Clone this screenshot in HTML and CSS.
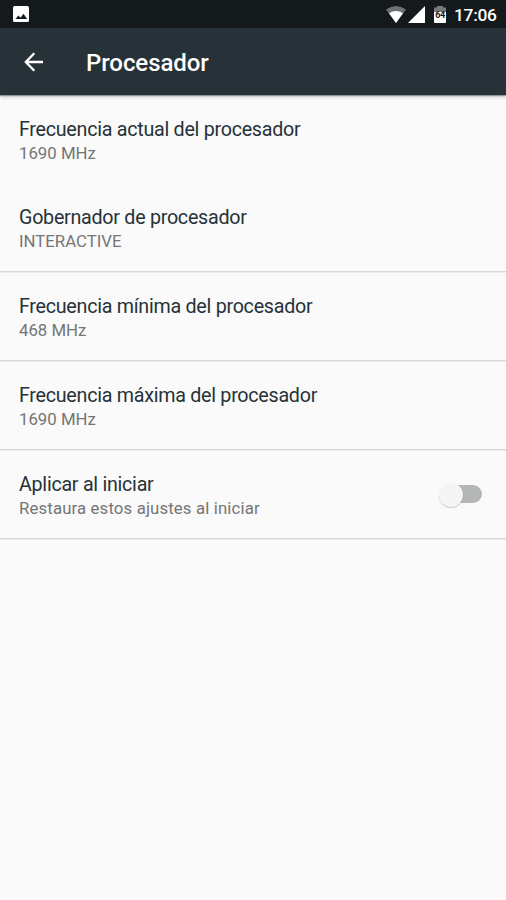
FILE: index.html
```html
<!DOCTYPE html>
<html lang="es">
<head>
<meta charset="utf-8">
<meta name="viewport" content="width=device-width, initial-scale=1">
<title>Procesador</title>
<link rel="stylesheet" href="styles.css">
</head>
<body>
<div class="status-bar">
  <svg class="photo" width="16" height="16" viewBox="0 0 16 16"><rect width="16" height="16" rx="1.6" fill="#fff"/><path d="M2.500 13 5.500 9.500l2 2.200 3-4 3.600 5.300z" fill="#14191c"/></svg>
  <div class="status-icons">
    <svg class="wifi" width="20" height="17" viewBox="0 0 20 17"><path d="M0 3.600Q10-3.600 20 3.600L10 17z" fill="#6d7173"/><path d="M3 7.200Q10 3 17 7.200L10 17z" fill="#fff"/></svg>
    <svg class="signal" width="17" height="17" viewBox="0 0 17 17"><path d="M17 0v17H0z" fill="#fff"/></svg>
    <span class="battery"><svg width="12" height="17" viewBox="0 0 12 17"><path d="M3 0h6v1.500h3V8H0V1.500h3z" fill="#76797b"/><path d="M0 6h12v10.200q0 .8-.8.8H.8Q0 17 0 16.200z" fill="#fff"/></svg><span class="level">64</span></span>
    <span class="clock">17:06</span>
  </div>
</div>
<header class="toolbar">
  <svg class="back" width="20" height="20" viewBox="0 0 20 20"><path d="M19 10H2M10.300 1.200 1.800 10l8.500 8.800" fill="none" stroke="#fff" stroke-width="2.300"/></svg>
  <h1>Procesador</h1>
</header>
<main>
  <div class="row plain"><div><h2>Frecuencia actual del procesador</h2><p>1690 MHz</p></div></div>
  <div class="row"><div><h2>Gobernador de procesador</h2><p>INTERACTIVE</p></div></div>
  <div class="row"><div><h2>Frecuencia mínima del procesador</h2><p>468 MHz</p></div></div>
  <div class="row"><div><h2>Frecuencia máxima del procesador</h2><p>1690 MHz</p></div></div>
  <div class="row"><div><h2>Aplicar al iniciar</h2><p class="description">Restaura estos ajustes al iniciar</p></div><span class="switch"></span></div>
</main>
</body>
</html>
```
FILE: styles.css
```css
* { box-sizing: border-box; }
body {
  margin: 0;
  min-height: 900px;
  background: #fafafa;
  color: #263238;
  font-family: Roboto, sans-serif;
}
h1, h2, p { margin: 0; }
svg { display: block; }
.status-bar {
  height: 28px;
  padding: 6px 9px 0 13px;
  display: flex;
  justify-content: space-between;
  align-items: flex-start;
  background: #14191c;
}
.status-icons { display: flex; color: #fff; }
.signal { margin-left: 2px; }
.battery { position: relative; margin-left: 9px; }
.level {
  position: absolute;
  left: -1px;
  top: 5px;
  width: 14px;
  color: #14191c;
  font-size: 9px;
  font-weight: 700;
  line-height: 9px;
  letter-spacing: -.3px;
  text-align: center;
}
.clock {
  width: 43px;
  margin-left: 8px;
  font-size: 17.4px;
  font-weight: 500;
  line-height: 18px;
  letter-spacing: -.3px;
}
.toolbar {
  position: relative;
  height: 67px;
  display: flex;
  align-items: center;
  padding: 1px 0 0 24px;
  background: #263238;
  box-shadow: 0 1px 1px rgba(0, 0, 0, .3), 0 2px 4px rgba(0, 0, 0, .2);
}
h1 {
  margin-left: 42px;
  padding-top: 2px;
  color: #fff;
  font-size: 24px;
  font-weight: 500;
  line-height: 30px;
  letter-spacing: -.07px;
}
main { padding-top: 1px; }
.row {
  height: 89px;
  display: flex;
  justify-content: space-between;
  padding: 22px 19px 0;
  border-bottom: 1px solid #d6d7d7;
  box-shadow: 0 1px 0 #ececec;
}
.row.plain {
  height: 87px;
  padding-top: 21px;
  border-bottom: 0;
  box-shadow: none;
}
h2 { font-size: 19.7px; font-weight: 400; line-height: 25px; letter-spacing: -.27px; }
p { color: #757575; font-size: 16.8px; line-height: 23px; }
.description { letter-spacing: .13px; }
.switch {
  position: relative;
  width: 37px;
  height: 18px;
  margin: 13px 5px 0 0;
  border-radius: 9px;
  background: #b5b6b6;
}
.switch::before {
  content: "";
  position: absolute;
  left: -6px;
  top: -2px;
  width: 24px;
  height: 24px;
  border-radius: 50%;
  background: #f5f5f5;
  box-shadow: 0 1px 1px rgba(0, 0, 0, .2);
}
```
